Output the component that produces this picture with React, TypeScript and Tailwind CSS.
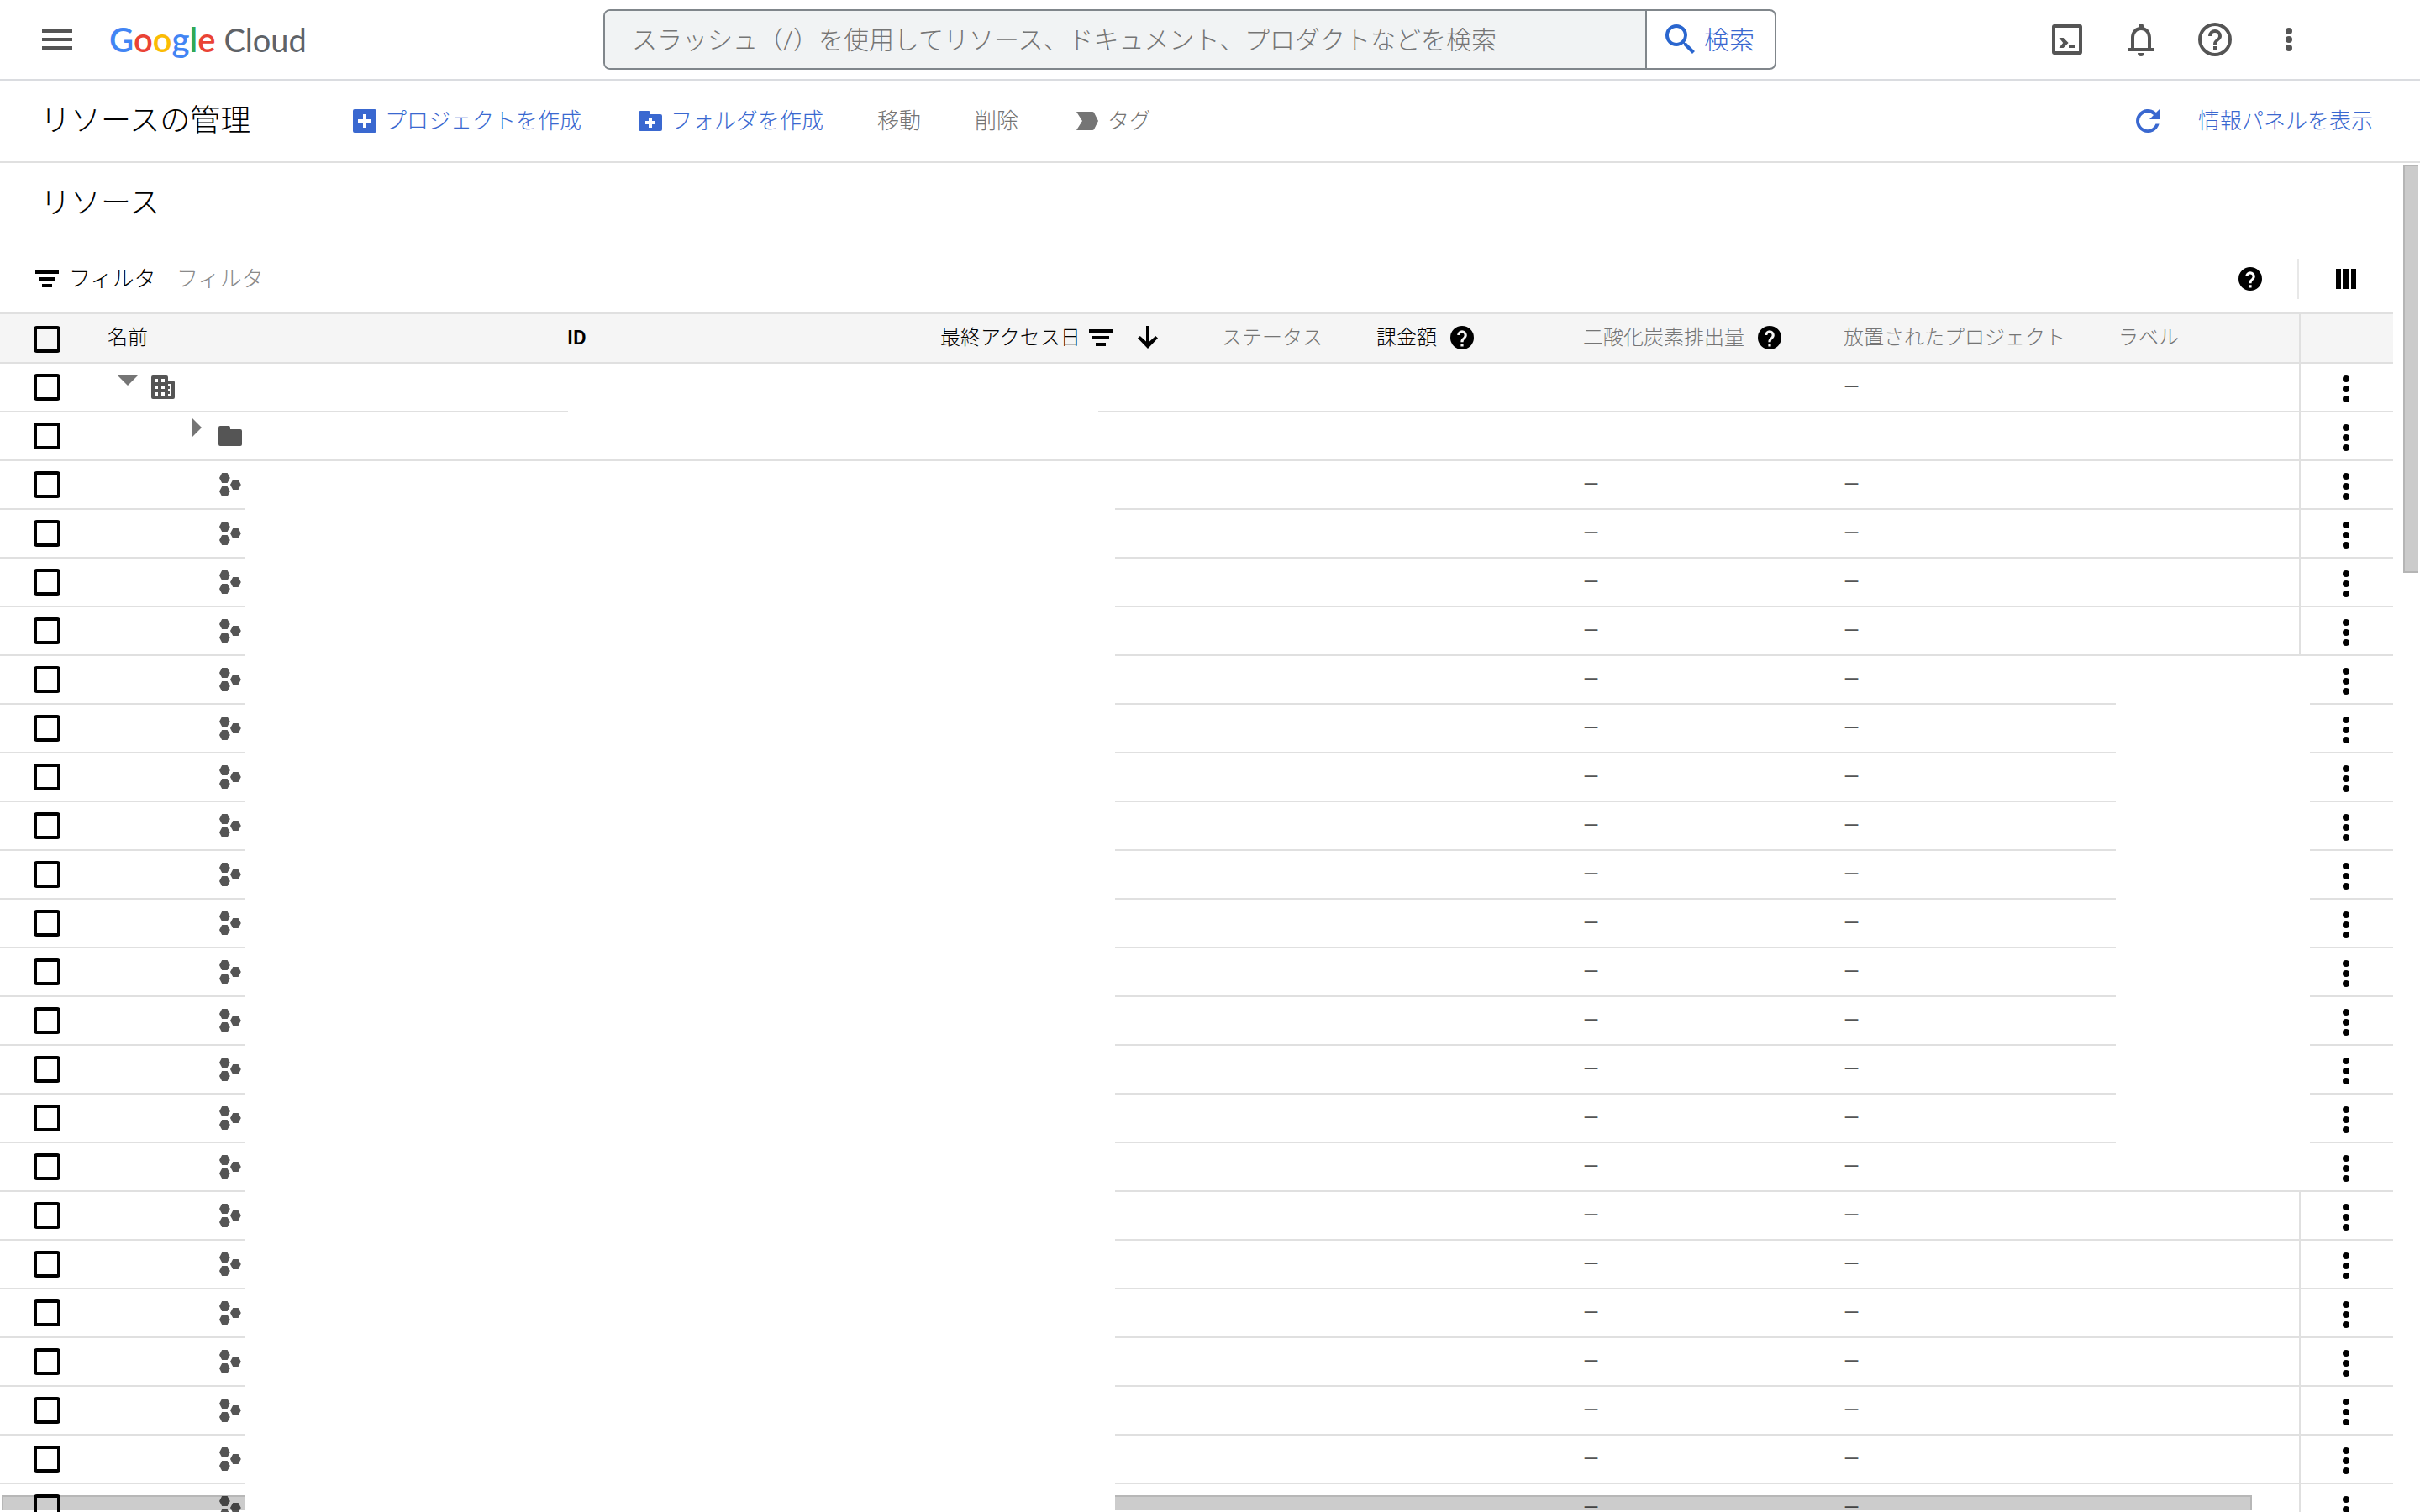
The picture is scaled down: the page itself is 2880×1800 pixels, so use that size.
import { ReactNode } from "react";

type NodeKind = "organization" | "folder" | "project";

type Resource = {
  kind: NodeKind;
  carbon: string;
  abandoned: string;
};

const resources: Resource[] = [
  { kind: "organization", carbon: "", abandoned: "—" },
  { kind: "folder", carbon: "", abandoned: "" },
  ...Array.from({ length: 22 }, () => ({
    kind: "project" as NodeKind,
    carbon: "—",
    abandoned: "—",
  })),
];

const Icon = ({ size = 18, className, children }: { size?: number; className: string; children: ReactNode }) => (
  <svg viewBox={`0 0 ${size} ${size}`} className={`shrink-0 ${className}`} fill="currentColor" aria-hidden="true">
    {children}
  </svg>
);

const HelpFilled = () => (
  <Icon className="size-9">
    <path
      fillRule="evenodd"
      d="M9 2a7 7 0 1 0 0 14A7 7 0 0 0 9 2zm-.8 10.6h1.6v1.6H8.2v-1.6zM9.8 11.6H8.2c0-2.5 2.1-2.5 2.1-4.1A1.3 1.3 0 0 0 9 6.2 1.3 1.3 0 0 0 7.7 7.5H6.1a2.9 2.9 0 0 1 5.8 0c0 2-2.1 2.3-2.1 4.1z"
    />
  </Icon>
);

const FilterIcon = () => (
  <Icon className="size-9">
    <path d="M2 4h14v2H2zM4 8h10v2H4zM6 12h6v2H6z" />
  </Icon>
);

function Logo() {
  return (
    <a href="#" aria-label="Google Cloud" className="flex items-baseline gap-2.5 font-[Lato,sans-serif] leading-none font-normal">
      <span className="text-[40px] font-semibold">
        <span className="text-[#4285f4]">G</span>
        <span className="text-[#ea4335]">o</span>
        <span className="text-[#fbbc04]">o</span>
        <span className="text-[#4285f4]">g</span>
        <span className="text-[#34a853]">l</span>
        <span className="text-[#ea4335]">e</span>
      </span>
      <span className="text-[38px] text-[#5f6368]">Cloud</span>
    </a>
  );
}

function Header() {
  return (
    <header className="grid h-24 shrink-0 grid-cols-[minmax(0,718fr)_1396px_minmax(0,766fr)] items-center border-b-2 border-[#dadce0] text-[#555]">
      <div className="flex items-center gap-[38px] pl-11">
        <button aria-label="ナビゲーション メニュー">
          <Icon size={24} className="size-12">
            <path d="M3 6h18v2H3zM3 11h18v2H3zM3 16h18v2H3z" />
          </Icon>
        </button>
        <Logo />
      </div>
      <form className="flex h-[72px] overflow-hidden rounded-lg border-2 border-[#80868b]">
        <input
          type="text"
          aria-label="検索"
          placeholder="スラッシュ（/）を使用してリソース、ドキュメント、プロダクトなどを検索"
          className="min-w-0 flex-1 bg-[#f1f3f4] pl-8 text-[30px] outline-none placeholder:text-[#757575]"
        />
        <button type="button" className="flex w-[154px] items-center gap-1 border-l-2 border-[#80868b] pl-4 text-[30px] text-[#3a68d0]">
          <Icon size={24} className="size-12 text-[#2a66cf]">
            <path d="M15.5 14h-.79l-.28-.27A6.47 6.47 0 0 0 16 9.5 6.5 6.5 0 1 0 9.5 16c1.61 0 3.09-.59 4.23-1.57l.27.28v.79l5 4.99L20.49 19l-4.99-5zm-6 0C7.01 14 5 11.99 5 9.5S7.01 5 9.5 5 14 7.01 14 9.5 11.99 14 9.5 14z" />
          </Icon>
          検索
        </button>
      </form>
      <div className="flex items-center justify-end gap-10 pr-[132px]">
        <button aria-label="Cloud Shell">
          <Icon size={24} className="size-12">
            <path
              fillRule="evenodd"
              d="M4.5 3h15A1.5 1.5 0 0 1 21 4.5v15a1.5 1.5 0 0 1-1.5 1.5h-15A1.5 1.5 0 0 1 3 19.5v-15A1.5 1.5 0 0 1 4.5 3zM5 5v14h14V5H5z"
            />
            <path d="M7.2 11h2.6l3 3-3 3H7.2l2.4-3zM13 15h4v2h-4z" />
          </Icon>
        </button>
        <button aria-label="通知">
          <Icon size={24} className="size-12">
            <path d="M18 17v-6c0-3.07-1.63-5.64-4.5-6.32V4a1.5 1.5 0 0 0-3 0v.68C7.64 5.36 6 7.92 6 11v6H4v2h16v-2h-2zm-2 0H8v-6c0-2.48 1.51-4.5 4-4.5s4 2.02 4 4.5v6zm-4 5a2 2 0 0 0 2-2h-4a2 2 0 0 0 2 2z" />
          </Icon>
        </button>
        <button aria-label="ヘルプ">
          <Icon size={24} className="size-12">
            <path d="M11 18h2v-2h-2v2zm1-16a10 10 0 1 0 0 20 10 10 0 0 0 0-20zm0 18a8 8 0 1 1 0-16 8 8 0 0 1 0 16zm0-14a4 4 0 0 0-4 4h2a2 2 0 1 1 4 0c0 2-3 1.75-3 5h2c0-2.25 3-2.5 3-5a4 4 0 0 0-4-4z" />
          </Icon>
        </button>
        <button aria-label="設定とユーティリティ">
          <Icon size={24} className="size-12">
            <circle cx="12" cy="7" r="2" />
            <circle cx="12" cy="12" r="2" />
            <circle cx="12" cy="17" r="2" />
          </Icon>
        </button>
      </div>
    </header>
  );
}

function Toolbar() {
  return (
    <div className="flex h-[98px] shrink-0 items-center border-b-2 border-[#e0e0e0] pr-14 pl-12 text-[26px] text-[#3a68d0]">
      <h1 className="w-[368px] text-[36px] text-black">リソースの管理</h1>
      <div className="flex items-center gap-16">
        <button className="flex items-center gap-1.5">
          <Icon className="size-9">
            <path fillRule="evenodd" d="M3 2h12a1 1 0 0 1 1 1v12a1 1 0 0 1-1 1H3a1 1 0 0 1-1-1V3a1 1 0 0 1 1-1zm5 3v3H5v2h3v3h2v-3h3V8h-3V5H8z" />
          </Icon>
          プロジェクトを作成
        </button>
        <button className="flex items-center gap-1.5">
          <Icon className="size-9">
            <path fillRule="evenodd" d="M3 3h5a1 1 0 0 1 1 1v1h6a1 1 0 0 1 1 1v8a1 1 0 0 1-1 1H3a1 1 0 0 1-1-1V4a1 1 0 0 1 1-1zm5 4v2H6v2h2v2h2v-2h2V9h-2V7H8z" />
          </Icon>
          フォルダを作成
        </button>
        <button className="text-[#757575]">移動</button>
        <button className="text-[#757575]">削除</button>
        <button className="flex items-center gap-1.5 text-[#757575]">
          <Icon className="size-9">
            <path d="M2.5 3.5H12a1.2 1.2 0 0 1 1 .5L15.5 9 13 14a1.2 1.2 0 0 1-1 .5H2.5L6 9z" />
          </Icon>
          タグ
        </button>
      </div>
      <div className="ml-auto flex items-center gap-[42px]">
        <button aria-label="更新">
          <Icon className="size-9">
            <path d="M13.95 4.05A7 7 0 1 0 15.8 10.8h-2.1A5 5 0 1 1 12.5 5.5L10 8h6V2z" />
          </Icon>
        </button>
        <button>情報パネルを表示</button>
      </div>
    </div>
  );
}

function FilterBar() {
  return (
    <div className="flex h-[84px] items-center pt-1 pl-[38px] text-[26px]">
      <FilterIcon />
      <label htmlFor="filter" className="w-32 pl-2">
        フィルタ
      </label>
      <input
        id="filter"
        type="text"
        placeholder="フィルタ"
        className="h-12 min-w-0 flex-1 pl-2 outline-none placeholder:text-[#8a8a8a]"
      />
      <button aria-label="フィルタのヘルプ" className="mr-[38px]">
        <HelpFilled />
      </button>
      <button aria-label="列の表示オプション" className="flex h-12 w-[114px] items-center border-l-2 border-[#e8e8e8] pl-[38px]">
        <Icon className="size-9">
          <path d="M3 3h3v12H3zM7 3h4v12H7zM12 3h3v12h-3z" />
        </Icon>
      </button>
    </div>
  );
}

const Checkbox = ({ label }: { label: string }) => (
  <input
    type="checkbox"
    aria-label={label}
    className="block size-8 appearance-none rounded border-4 border-black checked:bg-black"
  />
);

function NodeIcon({ kind }: { kind: NodeKind }) {
  if (kind === "organization") {
    return (
      <div className="flex items-center gap-3 pl-3 text-[#555]">
        <button aria-label="閉じる" className="mb-4 text-[#757575]">
          <Icon size={12} className="size-6">
            <path d="M0 3h12L6 9z" />
          </Icon>
        </button>
        <Icon className="size-9">
          <path
            fillRule="evenodd"
            d="M3 2h8a1 1 0 0 1 1 1v2h3a1 1 0 0 1 1 1v9a1 1 0 0 1-1 1H3a1 1 0 0 1-1-1V3a1 1 0 0 1 1-1zm1 2v2h2V4H4zm4 0v2h2V4H8zM4 8v2h2V8H4zm4 0v2h2V8H8zm-4 4v2h2v-2H4zm4 0v2h2v-2H8zm4-5v1h1v2h-1v1h1v2h-1v1h2V7h-2z"
          />
        </Icon>
      </div>
    );
  }
  if (kind === "folder") {
    return (
      <div className="flex items-center gap-1 pl-[100px] text-[#555]">
        <button aria-label="開く" className="mb-5 text-[#757575]">
          <Icon size={12} className="size-6">
            <path d="M0 0l6 6-6 6z" />
          </Icon>
        </button>
        <Icon className="size-9">
          <path d="M3 3h5a1 1 0 0 1 1 1v1h6a1 1 0 0 1 1 1v8a1 1 0 0 1-1 1H3a1 1 0 0 1-1-1V4a1 1 0 0 1 1-1z" />
        </Icon>
      </div>
    );
  }
  return (
    <div className="pl-32 text-[#555]">
      <Icon className="size-9">
        <path d="M4.1 2h3.2l1.6 3-1.6 3H4.1L2.5 5zM4.1 10h3.2l1.6 3-1.6 3H4.1l-1.6-3zM10.6 6h3.2l1.6 3-1.6 3h-3.2L9 9z" />
      </Icon>
    </div>
  );
}

function ResourceTable() {
  return (
    <table className="w-full table-fixed border-collapse text-left text-[24px]">
      <colgroup>
        <col className="w-32" />
        <col className="w-[547px]" />
        <col className="w-[444px]" />
        <col className="w-[335px]" />
        <col className="w-[184px]" />
        <col className="w-[246px]" />
        <col className="w-[310px]" />
        <col className="w-[327px]" />
        <col />
        <col className="w-28" />
      </colgroup>
      <thead>
        <tr className="h-[61px] bg-[#f5f5f5] shadow-[inset_0_2px_#e0e0e0,inset_0_-2px_#e0e0e0] *:p-0 *:pb-0.5 *:font-light">
          <th>
            <div className="pt-1 pl-10">
              <Checkbox label="すべて選択" />
            </div>
          </th>
          <th>名前</th>
          <th>
            <span className="font-semibold">ID</span>
          </th>
          <th>
            <button className="flex items-center">
              最終アクセス日
              <span className="flex gap-5 pl-1.5">
                <FilterIcon />
                <Icon className="size-9">
                  <path d="M8 2h2v9.3l3.6-3.3L15 9.3 9 15.5 3 9.3 4.400 8 8 11.3z" />
                </Icon>
              </span>
            </button>
          </th>
          <th className="text-[#757575]">ステータス</th>
          <th>
            <span className="flex items-center gap-3">
              課金額 <HelpFilled />
            </span>
          </th>
          <th className="text-[#757575]">
            <span className="flex items-center gap-3">
              二酸化炭素排出量
              <span className="text-black">
                <HelpFilled />
              </span>
            </span>
          </th>
          <th className="text-[#757575]">放置されたプロジェクト</th>
          <th className="text-[#757575]">ラベル</th>
          <th className="shadow-[inset_2px_0_#e0e0e0]" aria-label="操作" />
        </tr>
      </thead>
      <tbody>
        {resources.map((resource, index) => (
          <tr key={index} className="h-[58px] shadow-[inset_0_-2px_#e0e0e0] *:p-0 *:pb-0.5">
            <td>
              <div className="pl-10">
                <Checkbox label={`行 ${index + 1} を選択`} />
              </div>
            </td>
            <td>
              <NodeIcon kind={resource.kind} />
            </td>
            <td />
            <td />
            <td />
            <td />
            <td className="font-normal text-[#555]">{resource.carbon}</td>
            <td className="font-normal text-[#555]">{resource.abandoned}</td>
            <td />
            <td className="shadow-[inset_2px_0_#e0e0e0]">
              <button aria-label="その他の操作" className="mx-auto block pt-1">
                <Icon size={24} className="size-12">
                  <circle cx="12" cy="6" r="2" />
                  <circle cx="12" cy="12" r="2" />
                  <circle cx="12" cy="18" r="2" />
                </Icon>
              </button>
            </td>
          </tr>
        ))}
      </tbody>
    </table>
  );
}

export default function App() {
  return (
    <div className="flex h-screen flex-col overflow-hidden bg-white font-[Roboto,'Noto_Sans_CJK_JP',sans-serif] font-light text-black">
      <Header />
      <Toolbar />
      <div className="flex min-h-0 flex-1">
        <main className="relative min-w-0 flex-1 overflow-hidden">
          <h2 className="flex h-[94px] items-center pt-0.5 pl-12 text-[36px]">リソース</h2>
          <FilterBar />
          <div className="relative">
            <ResourceTable />
            {/* blanked-out names, IDs and labels */}
            <div className="absolute top-[61px] left-[676px] h-[58px] w-[631px] bg-white" />
            <div className="absolute top-[409px] right-[99px] h-[636px] w-[231px] bg-white" />
          </div>
          {/* horizontal scrollbar */}
          <div className="absolute right-42 bottom-0.5 left-0.5 h-[18px] border-2 border-b-0 border-black/10 bg-black/20" />
          <div className="absolute top-[355px] bottom-0 left-[292px] w-[1035px] bg-white" />
        </main>
        <div className="w-8 shrink-0 pt-0.5 pl-3">
          <div className="h-[486px] w-[18px] border-2 border-r-0 border-[#b5b5b5] bg-[#cbcbcb]" />
        </div>
      </div>
    </div>
  );
}
